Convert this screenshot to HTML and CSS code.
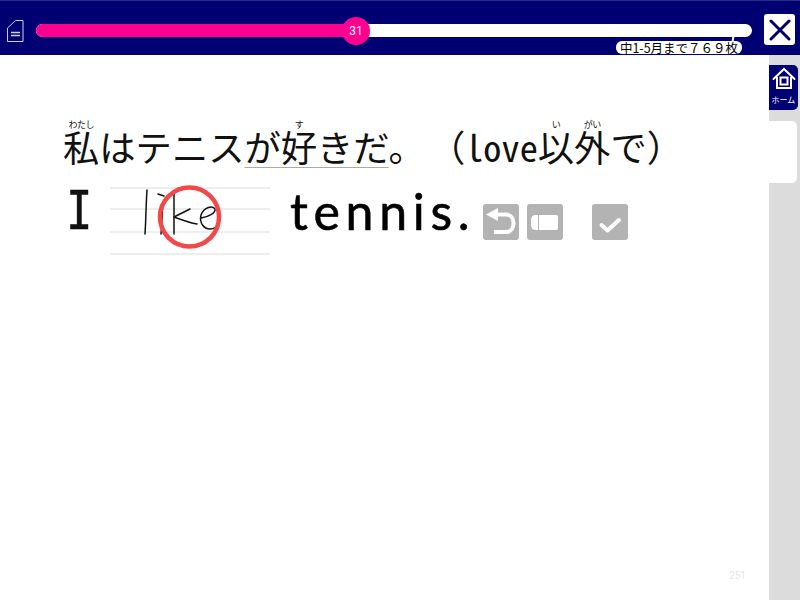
FILE: index.html
```html
<!DOCTYPE html>
<html lang="ja">
<head>
    <meta charset="UTF-8">
    <title>Eigo</title>
    <link rel="stylesheet" href="styles.css">
</head>
<body>
    <header class="topbar">
        <svg class="doc-icon" width="18" height="24" viewBox="0 0 18 24" fill="none" stroke="#cfd3ea" stroke-width="1">
            <path d="M1.5 9 L9.5 1.5 H17 V22.5 H1.5 Z"/>
            <path d="M5 13.5 H14 M5 16.5 H14" stroke-width="1.3"/>
        </svg>
        <div class="progress">
            <div class="progress-fill"></div>
            <div class="progress-knob">31</div>
            <div class="progress-notch"></div>
            <div class="progress-label">中1-5月まで７６９枚</div>
        </div>
        <button class="close-btn">
            <svg width="22" height="22" viewBox="0 0 22 22" stroke="#000073" stroke-width="3" stroke-linecap="round">
                <path d="M2 2 L20 20 M20 2 L2 20"/>
            </svg>
        </button>
    </header>

    <div class="body-row">
        <main class="content">
            <p class="question"><ruby>私<rt>わたし</rt></ruby>はテニス<span class="target">が<ruby>好<rt>す</rt></ruby>きだ</span>。<span class="hint">（<span class="latin">love</span><ruby>以<rt>い</rt></ruby><ruby>外<rt>がい</rt></ruby>で）</span></p>

            <div class="answer">
                <span class="word-i">I</span>
                <div class="write-box">
                    <div class="write-line"></div>
                    <div class="write-line"></div>
                    <div class="write-line"></div>
                    <svg class="ink" width="160" height="70" viewBox="110 186 160 70" fill="none">
                        <g stroke="#111" stroke-width="1.5" stroke-linecap="round" stroke-linejoin="round">
                            <path d="M147 191 C146 205 146 220 145 235"/>
                            <path d="M158 195 L164 197 M163 204 C162 215 162 225 161 235"/>
                            <path d="M174 195 C174 208 174 222 174 235"/>
                            <path d="M174 218 L190 210 M174 218 C182 221 190 224 197 225"/>
                            <path d="M201 219 C208 218 216 214 215 210 C213 206 204 208 201 216 C199 224 204 230 210 230 C214 230 217 228 219 224"/>
                        </g>
                        <circle cx="189.5" cy="218" r="29.5" stroke="#f34848" stroke-width="4.5"/>
                    </svg>
                </div>
                <span class="word">tennis.</span>
                <div class="tools">
                    <button class="tool-btn">
                        <svg width="36" height="36" viewBox="0 0 36 36" fill="none" stroke="#fff" stroke-width="4">
                            <path d="M3 10.5 L15 4 V17 Z" fill="#fff" stroke="none"/>
                            <path d="M14 10.5 H23 C33 10.5 33 28 23 28 H11"/>
                        </svg>
                    </button>
                    <button class="tool-btn">
                        <svg width="36" height="36" viewBox="0 0 36 36">
                            <path d="M9 11 H29 Q31 11 31 13 V24 Q31 26 29 26 H9 Q4 26 4 21 V16 Q4 11 9 11 Z" fill="#fff"/>
                            <path d="M11.5 11 V26" stroke="#b3b3b3"/>
                        </svg>
                    </button>
                    <button class="tool-btn tool-check">
                        <svg width="36" height="36" viewBox="0 0 36 36" fill="none" stroke="#fff" stroke-width="4" stroke-linecap="round" stroke-linejoin="round">
                            <path d="M9.5 21 L15.5 26.5 L27 16"/>
                        </svg>
                    </button>
                </div>
            </div>

            <div class="page-no">251</div>
        </main>

        <aside class="sidebar">
            <div class="tab-home">
                <svg width="24" height="24" viewBox="0 0 24 24" fill="none" stroke="#fff" stroke-width="2">
                    <path d="M1.5 12 L12 2 L22.5 12" stroke-linecap="round"/>
                    <path d="M5 10 V21 H19 V10"/>
                    <rect x="8.5" y="10.5" width="7" height="7"/>
                </svg>
                <span class="tab-text">ホーム</span>
            </div>
            <div class="tab-blank"></div>
        </aside>
    </div>
</body>
</html>
```

FILE: styles.css
```css
html, body {
    margin: 0;
    height: 100%;
}
body {
    width: 800px;
    height: 600px;
    overflow: hidden;
    background: #fff;
    font-family: "Noto Sans CJK JP", sans-serif;
    color: #111;
    text-spacing-trim: space-all;
}
.topbar {
    display: flex;
    align-items: flex-start;
    box-sizing: border-box;
    height: 55px;
    background: #000073;
    border-top: 1px solid #2a2a8a;
}
.doc-icon {
    margin: 18px 0 0 6px;
}
.progress {
    position: relative;
    width: 716px;
    height: 13px;
    margin: 23px 0 0 12px;
    background: #fff;
    border-radius: 7px;
}
.progress-fill {
    width: 320px;
    height: 100%;
    background: #ff0090;
    border-radius: 7px 0 0 7px;
}
.progress-knob {
    position: absolute;
    left: 306px;
    top: -7px;
    width: 28px;
    height: 28px;
    border-radius: 50%;
    background: #ff0090;
    color: #fff;
    font: 12px/28px "Roboto", sans-serif;
    text-align: center;
}
.progress-notch {
    position: absolute;
    left: 696px;
    top: 12px;
    width: 2px;
    height: 6px;
    background: #fff;
    transform: rotate(10deg);
}
.progress-label {
    position: absolute;
    left: 580px;
    top: 17px;
    width: 126px;
    height: 13px;
    background: #fff;
    border-radius: 6px;
    color: #000;
    font-size: 12.5px;
    line-height: 13px;
    text-align: center;
    white-space: nowrap;
}
.close-btn {
    display: flex;
    align-items: center;
    justify-content: center;
    width: 31px;
    height: 31px;
    margin: 13px 0 0 12px;
    padding: 0;
    background: #fff;
    border: none;
    border-radius: 3px;
}
.body-row {
    display: flex;
    height: 545px;
}
.content {
    position: relative;
    flex: 1;
    padding: 65px 0 0 63px;
}
.question {
    margin: 0;
    font-size: 36.3px;
    line-height: 52px;
    white-space: nowrap;
}
.question ruby {
    ruby-align: center;
}
.question rt {
    font-size: 9px;
    line-height: 9px;
    letter-spacing: -0.5px;
}
.target {
    text-decoration: underline 1px #aaa;
    text-decoration-skip-ink: none;
    text-underline-offset: 5px;
}
.hint {
    margin-left: 4px;
}
.latin {
    font-feature-settings: "hwid";
}
.answer {
    display: flex;
    align-items: flex-start;
    margin-top: 10px;
}
.word-i {
    width: 32px;
    margin: 2px 15px 0 0;
    font: 400 54px/1 "DejaVu Sans Mono", monospace;
    text-align: center;
    transform: scaleX(0.8);
    -webkit-text-stroke: 0.6px #000;
}
.write-box {
    position: relative;
    width: 160px;
    margin-top: 5px;
    border-bottom: 2px solid #eee;
}
.write-line {
    height: 19px;
    border-top: 2px solid #eee;
}
.write-line:nth-child(2) {
    height: 21px;
}
.write-line:nth-child(3) {
    height: 20px;
}
.ink {
    position: absolute;
    left: 0;
    top: -2px;
}
.word {
    margin: 4px 0 0 20px;
    font: 400 50px/1 "Lato", sans-serif;
    letter-spacing: 5.7px;
    color: #000;
    -webkit-text-stroke: 0.6px #000;
}
.tools {
    display: flex;
    gap: 8px;
    margin: 22px 0 0 8px;
}
.tool-btn {
    display: flex;
    align-items: center;
    justify-content: center;
    width: 36px;
    height: 36px;
    padding: 0;
    background: #b3b3b3;
    border: none;
    border-radius: 3px;
}
.tool-check {
    margin-left: 21px;
}
.page-no {
    position: absolute;
    right: 23px;
    bottom: 19px;
    color: #e6e6e6;
    font: 10px "Roboto", sans-serif;
}
.sidebar {
    width: 31px;
    padding-top: 10px;
    background: #dcdcdc;
}
.tab-home {
    display: flex;
    flex-direction: column;
    align-items: center;
    box-sizing: border-box;
    width: 29px;
    height: 45px;
    padding-top: 2px;
    background: #000073;
    border-radius: 0 5px 5px 0;
}
.tab-text {
    margin-top: 4px;
    color: #fff;
    font-size: 8px;
    line-height: 10px;
}
.tab-blank {
    width: 28px;
    height: 62px;
    margin-top: 11px;
    background: #fff;
    border-radius: 0 5px 5px 0;
}
```
